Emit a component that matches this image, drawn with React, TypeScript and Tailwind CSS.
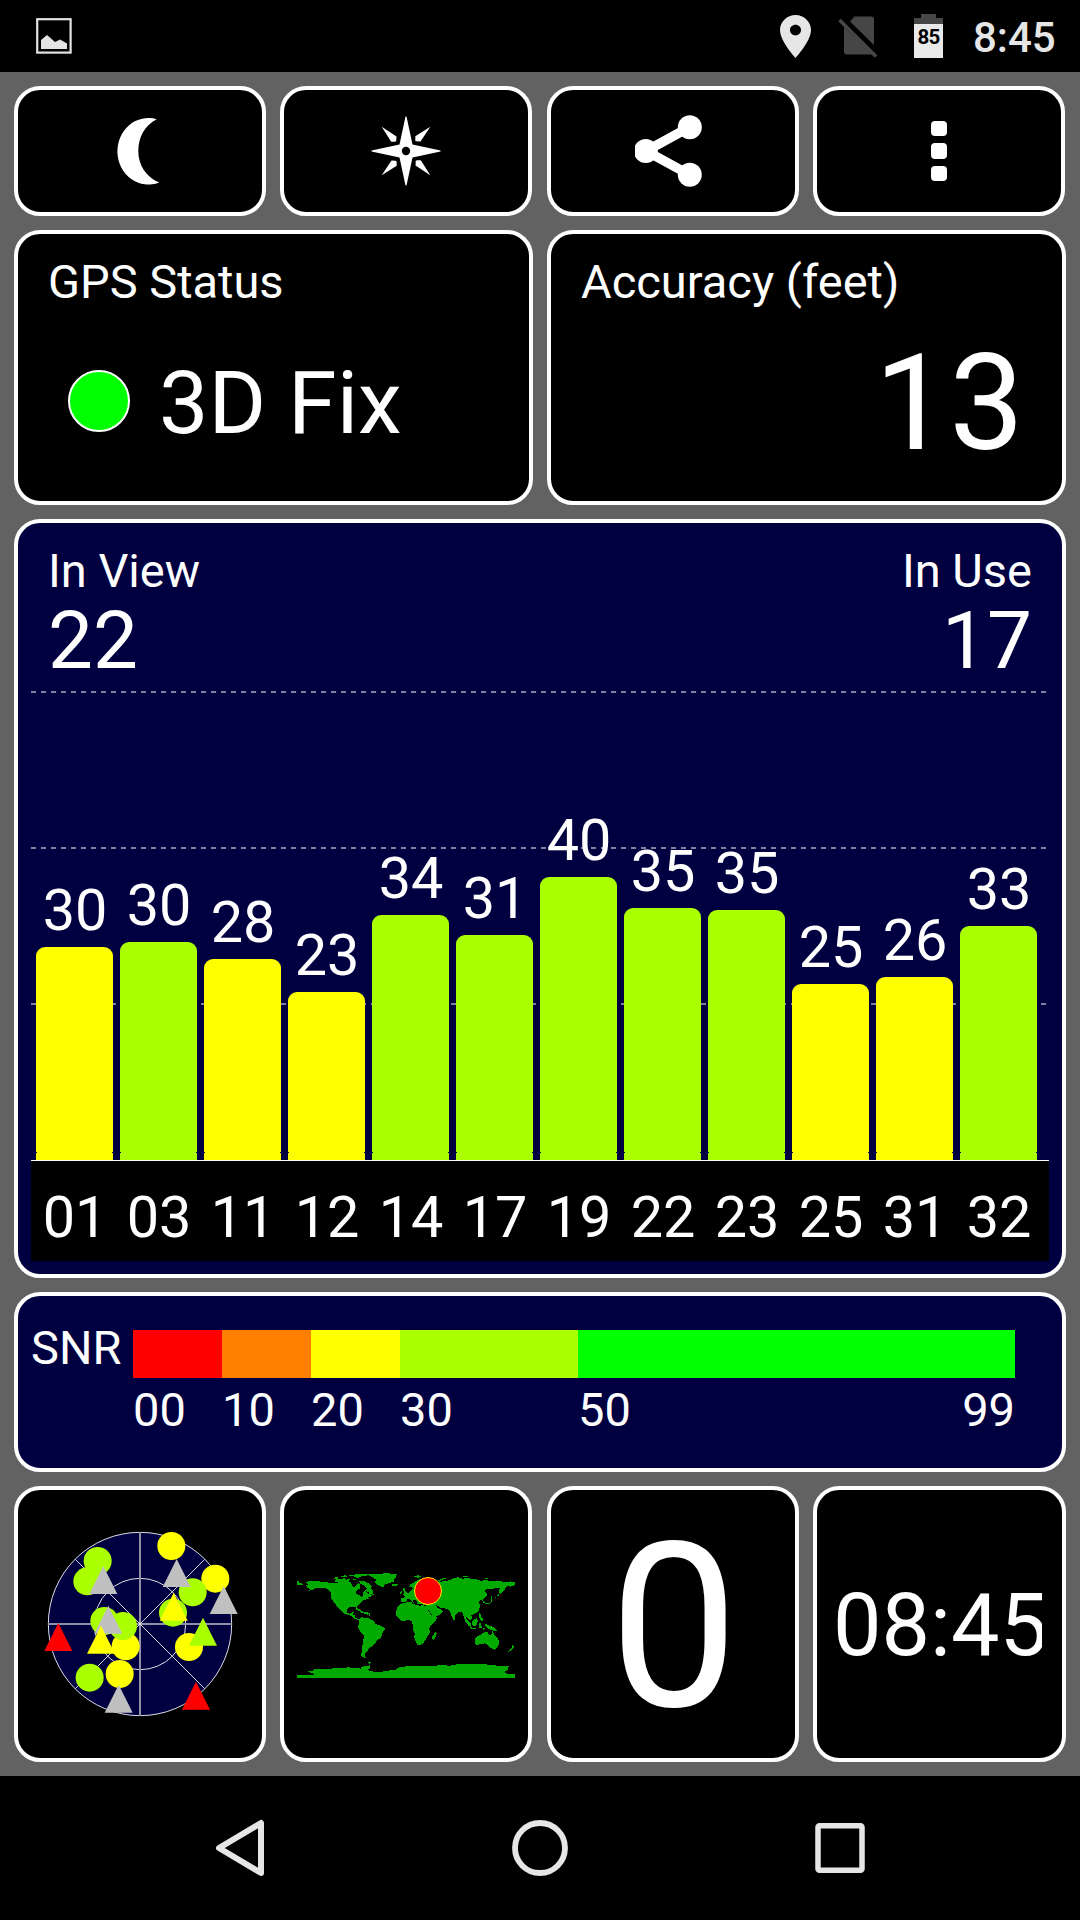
import type { ReactNode } from "react"

const bars = [
  { id: "01", snr: 30, height: 213, color: "bg-[#ffff00]" },
  { id: "03", snr: 30, height: 218, color: "bg-[#aaff00]" },
  { id: "11", snr: 28, height: 201, color: "bg-[#ffff00]" },
  { id: "12", snr: 23, height: 168, color: "bg-[#ffff00]" },
  { id: "14", snr: 34, height: 245, color: "bg-[#aaff00]" },
  { id: "17", snr: 31, height: 225, color: "bg-[#aaff00]" },
  { id: "19", snr: 40, height: 283, color: "bg-[#aaff00]" },
  { id: "22", snr: 35, height: 252, color: "bg-[#aaff00]" },
  { id: "23", snr: 35, height: 250, color: "bg-[#aaff00]" },
  { id: "25", snr: 25, height: 176, color: "bg-[#ffff00]" },
  { id: "31", snr: 26, height: 183, color: "bg-[#ffff00]" },
  { id: "32", snr: 33, height: 234, color: "bg-[#aaff00]" },
]

const scale = [
  { label: "00", size: "w-[89px]", color: "bg-[#ff0000]" },
  { label: "10", size: "w-[89px]", color: "bg-[#ff8000]" },
  { label: "20", size: "w-[89px]", color: "bg-[#ffff00]" },
  { label: "30", size: "w-[178px]", color: "bg-[#aaff00]" },
  { label: "50", size: "w-[437px]", color: "bg-[#00ff00]" },
]

// satellites on the sky view, in drawing order
const satellites = [
  { shape: "circle", x: 203, y: 153, fill: "#aaff00" },
  { shape: "circle", x: 172, y: 214, fill: "#aaff00" },
  { shape: "circle", x: 424, y: 108, fill: "#ffff00" },
  { shape: "circle", x: 556, y: 206, fill: "#ffff00" },
  { shape: "circle", x: 488, y: 247, fill: "#aaff00" },
  { shape: "circle", x: 429, y: 308, fill: "#aaff00" },
  { shape: "circle", x: 223, y: 333, fill: "#aaff00" },
  { shape: "circle", x: 287, y: 409, fill: "#ffff00" },
  { shape: "circle", x: 279, y: 348, fill: "#aaff00" },
  { shape: "circle", x: 477, y: 411, fill: "#ffff00" },
  { shape: "circle", x: 179, y: 503, fill: "#aaff00" },
  { shape: "circle", x: 269, y: 492, fill: "#ffff00" },
  { shape: "triangle", x: 220, y: 211, fill: "#c0c0c0" },
  { shape: "triangle", x: 440, y: 190, fill: "#c0c0c0" },
  { shape: "triangle", x: 581, y: 271, fill: "#c0c0c0" },
  { shape: "triangle", x: 431, y: 291, fill: "#ffff00" },
  { shape: "triangle", x: 519, y: 366, fill: "#aaff00" },
  { shape: "triangle", x: 235, y: 330, fill: "#c0c0c0" },
  { shape: "triangle", x: 213, y: 390, fill: "#ffff00" },
  { shape: "triangle", x: 85, y: 382, fill: "#ff0000" },
  { shape: "triangle", x: 498, y: 558, fill: "#ff0000" },
  { shape: "triangle", x: 266, y: 567, fill: "#c0c0c0" },
]

const Panel = ({ className = "", children }: { className?: string; children?: ReactNode }) => (
  <div className={`rounded-[26px] border-4 border-white ${className}`}>{children}</div>
)

const StatusBar = () => (
  <header className="flex h-[72px] items-start bg-black pl-9 pr-6">
    <svg className="mt-[18px] h-9 w-9" viewBox="0 0 36 36">
      <rect x="1.2" y="1.2" width="33.4" height="33.4" fill="none" stroke="#e4e4e4" strokeWidth="2.2" />
      <path d="M5 22l6-5 8 7 5-2.500 7 4v5.500H5z" fill="#e4e4e4" />
    </svg>
    <svg className="ml-[708px] mt-[15px] h-[43px] w-[31px]" viewBox="5 2 14 20" preserveAspectRatio="none">
      <path d="M12 2C8.130 2 5 5.130 5 9c0 5.250 7 13 7 13s7-7.750 7-13c0-3.870-3.130-7-7-7zm0 9.500c-1.380 0-2.500-1.120-2.500-2.500s1.120-2.500 2.500-2.500 2.500 1.120 2.500 2.500-1.120 2.500-2.500 2.500z" fill="#e6e6e6" />
    </svg>
    <svg className="ml-[27px] mt-4 h-[42px] w-10" viewBox="0 0 40 42">
      <path d="M12 5.500L16.500.500H33q3 0 3 3V29zM6 11L34.500 38.500H9q-3 0-3-3z" fill="#464646" />
      <path d="M1.500 4L38 40.500" stroke="#464646" strokeWidth="3.600" />
    </svg>
    <div className="ml-9 mt-[14px] flex h-11 w-[29px] flex-col items-center">
      <div className="h-1 w-[15px] bg-[#464646]" />
      <div className="h-1.5 w-full bg-[#464646]" />
      <div className="flex h-[34px] w-full justify-center bg-[#e9e9e9] pt-[3px] text-[20.500px] font-bold leading-[20px] tracking-[-0.800px] text-black">85</div>
    </div>
    <span className="ml-[30px] mt-[17px] text-[42px] font-medium leading-[42px] text-[#e6e6e6]">8:45</span>
  </header>
)

const Toolbar = () => (
  <div className="grid h-[130px] grid-cols-[252px_253px_252px_253px] gap-[14px]">
    {/* night mode */}
    <Panel className="flex items-center justify-center bg-black">
      <svg className="h-[70px] w-[70px]" viewBox="-34 -35 70 70">
        <path d="M17.700-31.800A31 33.300 0 1 0 20.200 31.500C7 26-.700 14-.700 0C-.700-14 6-26 17.700-31.800z" fill="#fff" />
      </svg>
    </Panel>
    {/* compass */}
    <Panel className="mr-px flex items-center justify-center bg-black">
      <svg className="h-[70px] w-[70px]" viewBox="-35 -35 70 70" fill="#fff">
        <path d="M-.500-34.500h1L6.500-6.500 34.500-.500v1L6.500 6.500.500 34.500h-1L-6.500 6.500-34.500.500v-1L-6.500-6.500z" />
        <circle r="4.200" fill="#000" />
        {[0, 90, 180, 270].map((a) => (
          <path key={a} d="M-24.300-24.300L-9.500-14.500-9.800-10.300-10.700-9.300-14.800-9.300z" transform={`rotate(${a})`} />
        ))}
      </svg>
    </Panel>
    {/* share */}
    <Panel className="flex items-center justify-center bg-black">
      <svg className="h-[76px] w-[76px]" viewBox="635 113 76 76" fill="#fff">
        <path d="M689.800 127L646 151l43.800 23.800" fill="none" stroke="#fff" strokeWidth="9.500" />
        <circle cx="645.800" cy="151" r="12" />
        <circle cx="689.800" cy="127.200" r="12" />
        <circle cx="689.800" cy="174.700" r="12" />
      </svg>
    </Panel>
    {/* menu */}
    <Panel className="mr-px flex flex-col items-center justify-center gap-[7px] bg-black">
      <div className="h-[15.500px] w-[15.500px] rounded bg-white" />
      <div className="h-[15.500px] w-[15.500px] rounded bg-white" />
      <div className="h-[15.500px] w-[15.500px] rounded bg-white" />
    </Panel>
  </div>
)

const SkyView = () => (
  <svg className="h-[220px] w-[220px] shrink-0" viewBox="0 12 660 660">
    <circle cx="330" cy="342" r="275" fill="#000040" stroke="#dcdce6" strokeWidth="3" />
    <circle cx="330" cy="342" r="137" fill="none" stroke="#dcdce6" strokeWidth="3" />
    <path d="M330 67v550M55 342h550" stroke="#8f8fa8" strokeWidth="6" />
    <path d="M136 148l388 388M524 148L136 536" stroke="#fff" strokeWidth="2.500" />
    {satellites.map((s, i) =>
      s.shape === "circle" ? (
        <circle key={i} cx={s.x} cy={s.y} r="42" fill={s.fill} />
      ) : (
        <path key={i} d={`M${s.x} ${s.y - 43}l42 84h-84z`} fill={s.fill} />
      )
    )}
  </svg>
)

const WorldMap = () => (
  <svg className="h-[150px] w-[244px] shrink-0" viewBox="12 -3 732 450" fill="#00aa00" shapeRendering="crispEdges">
    {/* north america */}
    <path d="M51 91l6 3v4l12 3v3H51zM78 97L90 93 112 94 130 95 150 99 165 98 185 97 205 99 213 97 217 108 224 112 232 102 236 97 241 108 239 116 232 120 227 126 230 132 240 136 246 142 249 134 248 128 254 122 262 126 264 132 270 128 276 136 270 141 262 140 268 146 258 148 248 152 244 158 238 163 231 170 234 178 231 181 227 172 212 170 205 173 200 181 203 189 209 192 216 187 221 187 219 193 226 196 226 203 232 207 238 206 236 209 226 208 216 199 204 194 190 190 180 180 172 172 163 158 154 147 153 130 149 122 139 116 124 113 112 113 96 120 84 124 92 117 82 113 78 107 84 103z" />
    <path d="M165 90l8-5 10 3 10-4 7 5 10-2-4 7 8 2-6 4-12-1-8 1-12-3-12-1zM158 85l10-4 8 2-8 4zM180 80l14-4 12 2-10 4zM207 76l20-3 18 0 16-2 14 0-12 5-18 3-10 4-14-1 4-4-12 1zM214 86l10 0 6 4-8 1zM236 92l12 1 12 3 10 7 6 8-6 3 8 7 4 16-8-4-8-7-10-4 4-7-6-8-12-5z" />
    <path d="M226 178l10-1 12 7 5 4-8 0-8-5zM252 187l10 0 8 4-8 3-9-2zM266 192l3 0 0 6-3 0zM228 170l2 0 0 6-2 0z" />
    {/* greenland, iceland */}
    <path d="M272 79L262 75 278 72 298 72 318 69 334 71 354 74 346 78 348 83 341 89 342 95 328 99 316 103 310 111 300 109 292 104 284 97 288 89 280 84zM334 102l10-1 10 2-4 4-12 1z" />
    {/* south america */}
    <path d="M237 208L244 200 250 203 262 203 272 207 282 213 286 221 300 227 313 232 316 238 308 247 304 259 300 266 291 270 287 279 279 287 273 291 266 295 262 303 256 308 253 315 257 321 247 321 242 315 246 304 246 290 249 281 251 263 251 254 242 247 236 235 232 231 237 221z" />
    {/* africa */}
    <path d="M366 160L374 158 388 156 396 156 398 162 408 164 418 167 428 166 438 168 442 177 449 187 456 198 460 202 472 200 468 210 459 219 450 230 448 237 450 246 446 254 440 262 436 270 431 279 422 285 412 285 408 277 403 262 404 250 399 240 400 231 395 214 386 210 370 213 362 211 354 204 348 195 348 182 353 171 362 162zM465 246l5 5-4 10-3 8-6-1 0-9 4-6z" />
    {/* europe and asia */}
    <path d="M363 157L363 144 375 142 373 136 380 131 392 124 398 118 397 112 387 112 390 104 402 97 412 90 425 86 438 90 448 98 460 98 480 97 488 93 500 92 512 90 522 84 535 82 548 86 560 84 575 86 590 88 600 92 620 91 640 93 660 94 680 96 692 94 705 97 705 106 692 110 684 108 676 113 673 122 664 130 660 134 656 124 660 114 650 113 636 117 622 116 613 124 622 130 620 138 612 144 608 150 614 157 612 160 606 150 602 150 597 156 600 168 597 180 590 188 582 192 574 196 578 204 570 212 564 206 558 200 556 208 561 220 556 214 550 198 548 188 540 184 530 190 524 198 525 208 520 210 514 196 510 184 504 177 492 175 478 172 474 168 468 166 472 174 482 178 488 184 480 194 462 202 458 198 450 186 440 172 436 164 424 163 410 160 412 153 405 150 398 150 402 160 396 154 388 148 382 148 376 157z" />
    <path d="M370 114l6 1 0 8 5 6-3 5-8 1 2-9-3-7zM362 124l5-1 0 7-6 1zM400 78l14-2 10 2-8 5-10-1zM474 92l10-6 12-3 4 2-14 5-8 5zM544 77l12 0 12 4-12 1zM614 84l12 1-8 3z" />
    <path d="M646 141l3-2 0 2-3 2zM652 137l4-4 2 2-4 4zM661 129l4-5 6-5 2 2-6 7-4 4zM612 156l10 4 8-2 4-6 0-14 3 2-1 14-5 6-10 3-9-3z" />
    {/* south-east asia, oceania */}
    <path d="M551 201l8 5 8 9 7 8 0 8-7-2-9-12zM576 216l8-8 6-3 4 8-4 12-8 4-6-6zM570 232l10 1 10 3-4 2-14-2zM596 218l8 0-2 6 4 8-6 4-4-9zM597 190l6 2 0 8 6 6-2 8-5-4-5-10zM616 222l10 4 12 4 8 6 6 6-10 0-8-2-10-5-8-6zM608 235l8 0-6 4z" />
    <path d="M586 263l10-6 9-5 8-6 10-1 2 8 8 3 4-14 5 10 8 9 7 10 0 10-5 10-7 8-8-2-8-5-5-6-10-6-12 2-8 3-8-2-1-10zM640 293l7 0-2 6-5-1zM696 285l6 5-2 4-6 6-4 4-8 2 8-7 5-5z" />
    {/* antarctica */}
    <path d="M51 384L51 375 102 375 98 370 82 364 100 362 104 358 135 356 180 355 205 352 230 354 242 356 246 350 262 347 270 346 270 356 262 360 272 364 300 366 322 362 345 360 358 352 385 348 410 349 450 348 480 346 500 345 504 350 515 345 540 342 570 342 600 341 625 344 660 348 686 349 684 358 674 366 685 373 705 373 705 384zM252 322l8 0-4 3zM264 336l10 0-6 6z" />
    <circle cx="444" cy="123" r="40.500" fill="#ff0000" stroke="#ffee00" strokeWidth="3" shapeRendering="auto" />
  </svg>
)

export default function App() {
  return (
    <div className="flex h-[1920px] w-[1080px] flex-col overflow-hidden bg-[#626262] font-['Roboto',sans-serif] text-white">
      <StatusBar />

      <main className="flex h-[1704px] flex-col gap-[14px] p-[14px]">
        <Toolbar />

        {/* fix status and accuracy */}
        <div className="grid h-[275px] grid-cols-2 gap-[14px]">
          <Panel className="bg-black px-[30px] pt-6">
            <h2 className="text-[47px] leading-[48px]">GPS Status</h2>
            <div className="ml-5 mt-[53px] flex gap-[29px]">
              <div className="mt-[11px] h-[62px] w-[62px] rounded-full border-2 border-white bg-[#00ff00]" />
              <span className="text-[88px] leading-[88px]">3D Fix</span>
            </div>
          </Panel>
          <Panel className="bg-black pl-[30px] pr-[38px] pt-6">
            <h2 className="text-[47px] leading-[48px]">Accuracy (feet)</h2>
            <p className="mt-[31px] text-right text-[133px] leading-[134px]">13</p>
          </Panel>
        </div>

        {/* signal chart */}
        <Panel className="flex h-[759px] flex-col bg-[#000040] px-[13px] pb-[13px] pt-6">
          <div className="flex h-[144px] justify-between px-[17px]">
            <div>
              <h2 className="text-[47px] leading-[48px]">In View</h2>
              <p className="mt-[6px] text-[80px] leading-[80px]">22</p>
            </div>
            <div className="text-right">
              <h2 className="text-[47px] leading-[48px]">In Use</h2>
              <p className="mt-[6px] text-[80px] leading-[80px]">17</p>
            </div>
          </div>
          <div className="relative h-[469px]">
            <div className="absolute inset-x-0 top-0 flex flex-col gap-[154px] pr-[3px]">
              <div className="h-0.5 bg-[repeating-linear-gradient(90deg,#80809f_0_5px,transparent_5px_10px)]" />
              <div className="h-0.5 bg-[repeating-linear-gradient(90deg,#80809f_0_5px,transparent_5px_10px)]" />
              <div className="h-0.5 bg-[repeating-linear-gradient(90deg,#80809f_0_5px,transparent_5px_10px)]" />
            </div>
            <div className="relative flex h-full items-end gap-[7px] pl-[5px]">
              {bars.map((b) => (
                <div key={b.id} className="flex w-[77px] flex-col items-center">
                  <span className="mb-[7px] pl-px text-[57.600px] leading-[58px]">{b.snr}</span>
                  <div className={`flex w-full items-end justify-between rounded-t-[9px] pb-[7px] ${b.color}`} style={{ height: b.height }}>
                    <span className="h-px w-px bg-[#000040]" />
                    <span className="h-px w-px bg-[#000040]" />
                  </div>
                </div>
              ))}
            </div>
          </div>
          <div className="flex h-[101px] gap-[7px] border-t border-white bg-black pl-[5px] pt-[28px]">
            {bars.map((b) => (
              <span key={b.id} className="w-[77px] pl-px text-center text-[57.600px] leading-[58px]">{b.id}</span>
            ))}
          </div>
        </Panel>

        {/* snr legend */}
        <Panel className="flex h-[180px] bg-[#000040] pl-[13px]">
          <span className="w-[102px] pt-[28px] text-[47px] leading-[48px]">SNR</span>
          <div className="w-[882px] pt-[34px]">
            <div className="flex h-12">
              {scale.map((s) => (
                <div key={s.label} className={`${s.size} ${s.color}`} />
              ))}
            </div>
            <div className="mt-[8px] flex text-[47px] leading-[48px]">
              {scale.map((s) => (
                <div key={s.label} className={`flex justify-between ${s.size}`}>
                  <span>{s.label}</span>
                  {s.label === "50" && <span>99</span>}
                </div>
              ))}
            </div>
          </div>
        </Panel>

        {/* bottom tiles */}
        <div className="grid h-[276px] grid-cols-[252px_253px_252px_253px] gap-[14px]">
          <Panel className="flex items-center justify-center bg-black">
            <SkyView />
          </Panel>
          <Panel className="mr-px flex items-center justify-center bg-black">
            <WorldMap />
          </Panel>
          <Panel className="bg-black pl-0.5 pt-[23px] text-center text-[230px] leading-[230px]">0</Panel>
          <Panel className="bg-black pl-4 pr-5 pt-[93px]">
            <div className="overflow-hidden text-[86.400px] leading-[86px]">08:45</div>
          </Panel>
        </div>
      </main>

      {/* navigation */}
      <nav className="flex h-36 items-center justify-center bg-black">
        <svg className="h-[60px] w-[660px]" viewBox="210 1818 660 60" fill="none" stroke="#e6e6e6">
          <path d="M261 1823v50L219 1848z" strokeWidth="6" strokeLinejoin="round" />
          <circle cx="540" cy="1848" r="25" strokeWidth="5.800" />
          <rect x="818" y="1825.800" width="44" height="44.500" rx="1.500" strokeWidth="5.500" />
        </svg>
      </nav>
    </div>
  )
}
